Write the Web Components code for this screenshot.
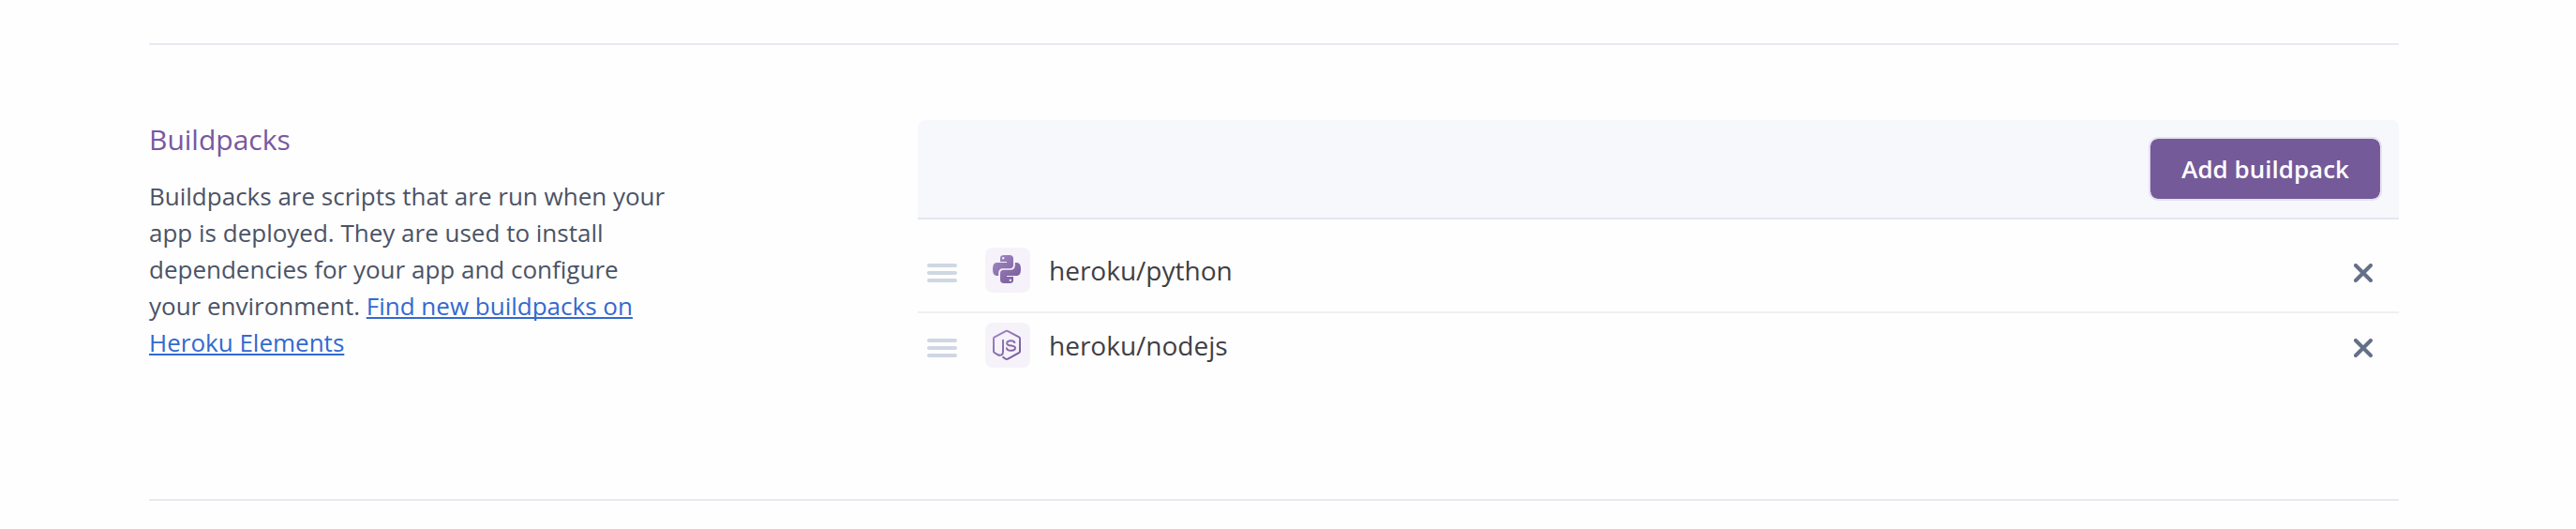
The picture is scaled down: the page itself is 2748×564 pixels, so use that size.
<!DOCTYPE html>
<html lang="en">
<head>
<meta charset="utf-8">
<meta name="viewport" content="width=device-width, initial-scale=1">
<title>Buildpacks</title>
<style>
  body { margin: 0; background: #fefefe; font-family: "Open Sans", "Noto Sans", sans-serif; }
</style>
</head>
<body>
<settings-section>
  <h2 slot="title">Buildpacks</h2>
  <p slot="description">Buildpacks are scripts that are run when your app is deployed. They are used to install dependencies for your app and configure your environment. <text-link href="#elements">Find new buildpacks on Heroku Elements</text-link></p>
  <buildpack-panel>
    <primary-button slot="action">Add buildpack</primary-button>
    <buildpack-row icon="python">heroku/python</buildpack-row>
    <buildpack-row icon="nodejs">heroku/nodejs</buildpack-row>
  </buildpack-panel>
</settings-section>

<script>
class BaseElement extends HTMLElement {
  constructor() {
    super();
    this.attachShadow({ mode: "open" });
  }
  connectedCallback() {
    this.shadowRoot.innerHTML = this.render();
  }
}

class SettingsSection extends BaseElement {
  render() {
    return `
      <style>
        :host { display: block; padding: 46px 189px 30px 159px; }
        section {
          display: grid; grid-template-columns: 41fr 79fr;
          padding: 80px 0 118px;
          border-top: 2px solid #e7eaf0; border-bottom: 2px solid #e7e9ef;
        }
        ::slotted(h2) { margin: 0 0 20px !important; font-size: 30px !important; line-height: 42px; font-weight: 400 !important; color: #79589f; }
        ::slotted(p) { margin: 0 !important; max-width: 556px; font-size: 26px; line-height: 39px; color: #4b5366; }
      </style>
      <section>
        <div><slot name="title"></slot><slot name="description"></slot></div>
        <slot></slot>
      </section>`;
  }
}

class TextLink extends BaseElement {
  render() {
    return `
      <style>
        :host { display: inline; }
        a { color: #3469cf; text-decoration: underline; text-decoration-thickness: 2px; text-underline-offset: 2px; text-decoration-skip-ink: none; }
      </style><a href="${this.getAttribute("href")}"><slot></slot></a>`;
  }
}

class PrimaryButton extends BaseElement {
  render() {
    return `
      <style>
        :host { display: block; }
        button {
          display: block; margin: 0; padding: 0 33px; height: 68px;
          border: 2px solid #e5e0f0; border-radius: 10px;
          background: #745a99; background-clip: padding-box;
          color: #fff; font: 600 26px/64px "Open Sans", "Noto Sans", sans-serif; cursor: pointer;
        }
      </style>
      <button type="button"><slot></slot></button>`;
  }
}

class BuildpackPanel extends BaseElement {
  render() {
    return `
      <style>
        :host { display: block; min-width: 0; }
        header {
          display: flex; justify-content: flex-end; padding: 18px;
          background: #f7f8fc; border-bottom: 2px solid #e5e6ee; border-radius: 8px 8px 0 0;
        }
        div { padding-top: 20px; }
      </style>
      <header><slot name="action"></slot></header>
      <div role="list"><slot></slot></div>`;
  }
}

class BuildpackRow extends BaseElement {
  render() {
    this.setAttribute("role", "listitem");
    return `
      <style>
        :host { display: flex; align-items: center; padding: 10px 18px 20px 10px; border-bottom: 2px solid #f0f0f3; }
        :host(:last-of-type) { border-bottom-color: transparent; }
        .handle { display: block; width: 32px; height: 20px; margin: 6px 30px 0 0; }
        .name { flex: 1; margin-left: 20px; font-size: 28px; line-height: 40px; color: #3f3f44; }
        button { display: grid; place-items: center; width: 40px; height: 40px; margin: 6px 0 0; padding: 0; border: 0; background: none; cursor: pointer; }
      </style>
      <svg class="handle" viewBox="0 0 32 20" fill="#cfd7e3" aria-hidden="true">
        <rect width="32" height="4" rx="2"/><rect y="8" width="32" height="4" rx="2"/><rect y="16" width="32" height="4" rx="2"/>
      </svg>
      <buildpack-icon name="${this.getAttribute("icon")}"></buildpack-icon>
      <span class="name"><slot></slot></span>
      <button type="button" aria-label="Remove buildpack">
        <svg width="20" height="20" viewBox="0 0 20 20" fill="none" stroke="#647088" stroke-width="4" stroke-linecap="round" aria-hidden="true"><path d="M2 2 18 18M18 2 2 18"/></svg>
      </button>`;
  }
}

const ICONS = {
  python: `
    <path fill="url(#g)" fill-rule="evenodd" d="M16 15V11.2Q16 8 20 8H26Q30 8 30 11.8V18.6Q30 22.3 26.2 22.3H19Q14.2 22.3 14.2 27V30H12.2Q8 30 8 23Q8 16 12.2 16H23V15ZM19.2 10a1.2 1.2 0 1 0 .01 0Z"/>
    <path fill="url(#g)" fill-rule="evenodd" d="M30 31V34.8Q30 38 26 38H20Q16 38 16 34.2V27.4Q16 23.7 19.8 23.7H27Q31.8 23.7 31.8 19V16H33.8Q38 16 38 23Q38 30 33.8 30H23V31ZM26.8 33.6a1.2 1.2 0 1 0 .01 0Z"/>`,
  nodejs: `
    <path fill="none" stroke="url(#g)" stroke-width="2" stroke-linejoin="round" d="M18.5 36.4 21.8 38.7Q23 39.4 24.2 38.7L36 32.2Q37 31.6 37 30.6V17Q37 16 36 15.4L24.2 9.1Q23 8.5 21.8 9.1L10 15.4Q9 16 9 17V30.6Q9 31.6 10 32.2L13 34C16.6 35.8 19 34.4 19 31V18"/>
    <path fill="none" stroke="url(#g)" stroke-width="2" d="M31.4 22C31.4 20 29.9 19.2 27.4 19.2C24.8 19.2 23.2 20.2 23.2 21.9C23.2 23.8 25 24.2 27.6 24.5C30.4 24.8 32 25.3 32 27.1C32 29 30.4 29.8 27.6 29.8C24.6 29.8 22.8 28.9 22.7 26.5"/>`
};

class BuildpackIcon extends BaseElement {
  render() {
    return `
      <style>
        :host { display: block; width: 48px; height: 48px; border-radius: 8px; background: #f5f2fa; }
        svg { display: block; }
      </style>
      <svg width="48" height="48" viewBox="0 0 48 48" aria-hidden="true">
        <defs><linearGradient id="g" gradientUnits="userSpaceOnUse" x1="10" y1="8" x2="38" y2="40"><stop stop-color="#a088c4"/><stop offset="1" stop-color="#745596"/></linearGradient></defs>
        ${ICONS[this.getAttribute("name")]}
      </svg>`;
  }
}

customElements.define("settings-section", SettingsSection);
customElements.define("text-link", TextLink);
customElements.define("primary-button", PrimaryButton);
customElements.define("buildpack-panel", BuildpackPanel);
customElements.define("buildpack-row", BuildpackRow);
customElements.define("buildpack-icon", BuildpackIcon);
</script>
</body>
</html>
